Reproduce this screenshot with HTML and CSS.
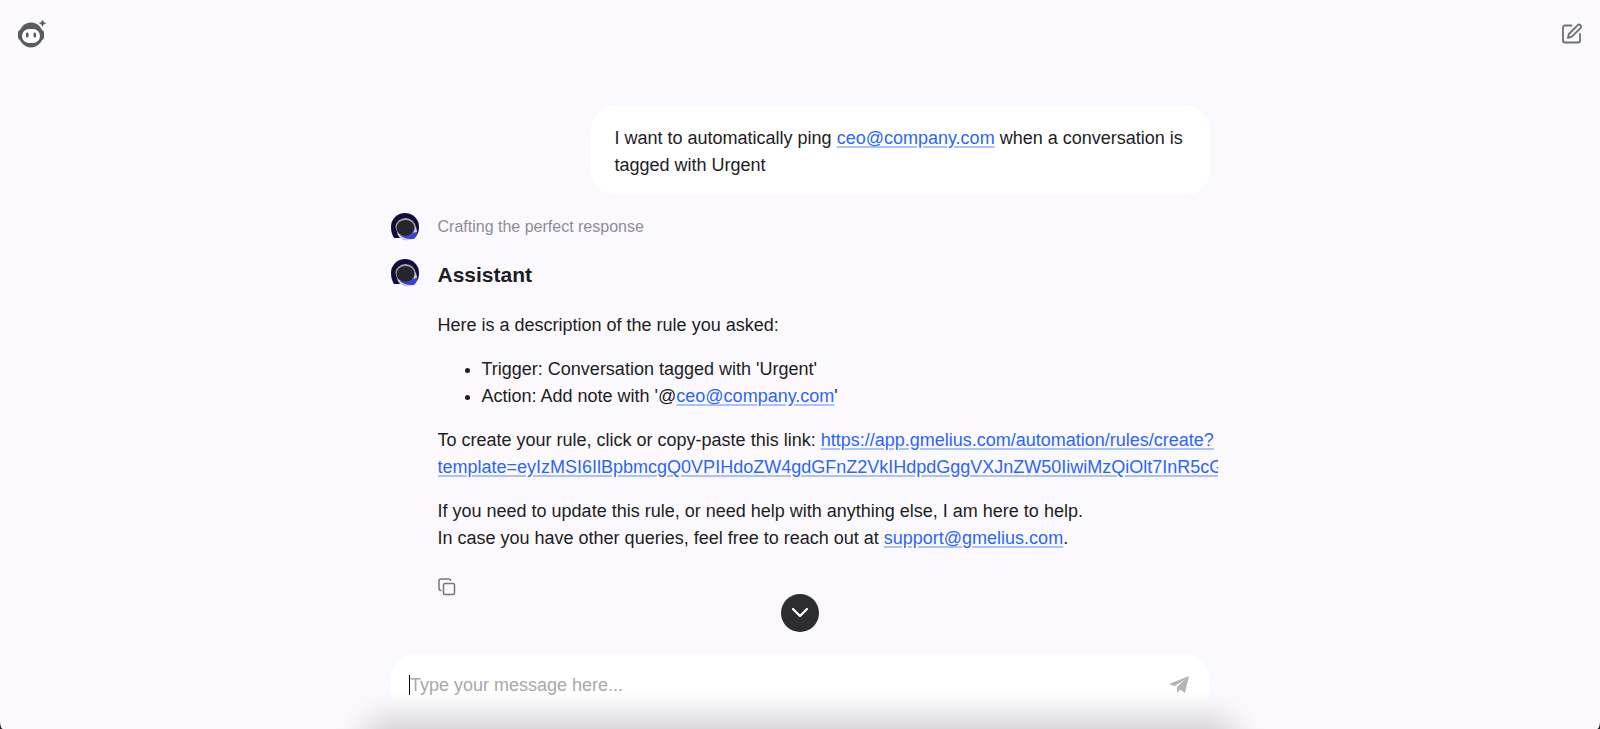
FILE: index.html
```html
<!DOCTYPE html>
<html lang="en">
<head>
  <meta charset="UTF-8" />
  <meta name="viewport" content="width=device-width, initial-scale=1.0"/>
  <title>Assistant</title>
  <link rel="stylesheet" href="styles.css">
</head>
<body>
  <header class="topbar">
    <a class="logo" href="#" aria-label="Home">
      <svg width="30" height="30" viewBox="0 0 30 30">
        <ellipse cx="14" cy="16" rx="12" ry="12.500" fill="#5b5b5d"/>
        <rect x="1" y="11" width="26" height="10" rx="3" fill="#5b5b5d"/>
        <rect x="5" y="10" width="18" height="14" rx="7" fill="#fff"/>
        <rect x="9" y="13.500" width="2.500" height="5" rx="1.200" fill="#5b5b5d"/>
        <rect x="16.500" y="13.500" width="2.500" height="5" rx="1.200" fill="#5b5b5d"/>
        <path d="M25.500 1l1 2.200 2.200 1-2.200 1-1 2.200-1-2.200-2.200-1 2.200-1z" fill="#5b5b5d" stroke="#5b5b5d" stroke-width=".5"/>
      </svg>
    </a>
    <button class="icon-btn" type="button" aria-label="New conversation">
      <svg width="22" height="22" viewBox="0 0 22 22" fill="none" stroke="#6f6f72" stroke-width="1.800" stroke-linecap="round" stroke-linejoin="round">
        <path d="M10.500 2.500H4a2 2 0 0 0-2 2v13a2 2 0 0 0 2 2h13a2 2 0 0 0 2-2V11"/>
        <path d="M16.500 2.300a2 2 0 0 1 3 2.800l-8.600 8.600-4 1.300 1-4z"/>
      </svg>
    </button>
  </header>

  <main class="chat">
    <div class="bubble">
      <p>I want to automatically ping <a href="mailto:ceo@company.com">ceo@company.com</a> when a conversation is tagged with Urgent</p>
    </div>

    <div class="row status">
      <svg class="avatar" viewBox="0 0 28 30">
        <path d="M14 0a14 14 0 0 1 14 14c0 5-2 9-5 11H3C1 22 0 18 0 14A14 14 0 0 1 14 0z" fill="#120b3c"/>
        <ellipse cx="16" cy="18" rx="10" ry="9.500" fill="#d0d0d8"/>
        <path d="M9 22l17-3c0 3-1 5-3 7-5 0-10 0-14-4z" fill="#3a3fe0"/>
        <ellipse cx="14.500" cy="14" rx="10" ry="9" fill="#a5a5ae"/>
        <ellipse cx="14.500" cy="15" rx="9" ry="8" fill="#25252b"/>
      </svg>
      <p class="status-text">Crafting the perfect response</p>
    </div>

    <div class="row">
      <svg class="avatar" viewBox="0 0 28 30">
        <path d="M14 0a14 14 0 0 1 14 14c0 5-2 9-5 11H3C1 22 0 18 0 14A14 14 0 0 1 14 0z" fill="#120b3c"/>
        <ellipse cx="16" cy="18" rx="10" ry="9.500" fill="#d0d0d8"/>
        <path d="M9 22l17-3c0 3-1 5-3 7-5 0-10 0-14-4z" fill="#3a3fe0"/>
        <ellipse cx="14.500" cy="14" rx="10" ry="9" fill="#a5a5ae"/>
        <ellipse cx="14.500" cy="15" rx="9" ry="8" fill="#25252b"/>
      </svg>
      <div class="answer">
        <h2>Assistant</h2>
        <p>Here is a description of the rule you asked:</p>
        <ul>
          <li>Trigger: Conversation tagged with 'Urgent'</li>
          <li>Action: Add note with '@<a href="mailto:ceo@company.com">ceo@company.com</a>'</li>
        </ul>
        <p class="long-link">To create your rule, click or copy-paste this link: <a href="#">https://app.gmelius.com/automation/rules/create?<br>template=eyIzMSI6IlBpbmcgQ0VPIHdoZW4gdGFnZ2VkIHdpdGggVXJnZW50IiwiMzQiOlt7InR5cG</a></p>
        <p>If you need to update this rule, or need help with anything else, I am here to help.<br>In case you have other queries, feel free to reach out at <a href="mailto:support@gmelius.com">support@gmelius.com</a>.</p>
        <button class="icon-btn copy" type="button" aria-label="Copy">
          <svg width="18" height="18" viewBox="0 0 18 18" fill="none" stroke="#77777a" stroke-width="1.500" stroke-linecap="round" stroke-linejoin="round">
            <rect x="5.500" y="5.500" width="11" height="11" rx="1.500"/>
            <path d="M3 12.500H2.500A1.500 1.500 0 0 1 1 11V2.500A1.500 1.500 0 0 1 2.500 1H11a1.500 1.500 0 0 1 1.500 1.500"/>
          </svg>
        </button>
      </div>
    </div>
  </main>

  <footer class="footer">
    <button class="scroll-btn" type="button" aria-label="Scroll to bottom">
      <svg width="18" height="12" viewBox="0 0 18 12" fill="none" stroke="#fff" stroke-width="2.200" stroke-linecap="round" stroke-linejoin="round">
        <path d="M2 2l7 7 7-7"/>
      </svg>
    </button>
    <form class="composer">
      <span class="caret"></span>
      <input type="text" placeholder="Type your message here..." aria-label="Message" />
      <button class="icon-btn" type="button" aria-label="Send">
        <svg width="20" height="18" viewBox="0 0 20 18">
          <path d="M20 0L0 8l5.500 2.200L16 3.500 8 11v6l3-3.500 5 3.500z" fill="#b5b5b8"/>
        </svg>
      </button>
    </form>
    <div class="shade"></div>
  </footer>
</body>
</html>
```

FILE: styles.css
```css
* {
  box-sizing: border-box;
}

html {
  background-color: #222;
}

body {
  margin: 0;
  min-height: 100vh;
  display: flex;
  flex-direction: column;
  border-radius: 0 0 3px 3px / 0 0 8px 8px;
  font-family: "Liberation Sans", Arial, sans-serif;
  font-size: 18px;
  line-height: 27px;
  color: #1d1d1f;
  background-color: #fbf9fd;
}

a {
  color: #2b66fa;
  text-decoration-color: #a9c3fc;
  text-decoration-thickness: 2px;
  text-underline-offset: 2px;
}

p, ul, h2 {
  margin: 0;
}

button {
  border: none;
  padding: 0;
  cursor: pointer;
}

.icon-btn {
  display: flex;
  background: none;
}

.topbar {
  display: flex;
  justify-content: space-between;
  align-items: center;
  padding: 19px 17px;
}

.logo {
  display: flex;
}

.chat {
  width: 100%;
  max-width: 819px;
  margin: 0 auto;
  padding-top: 38px;
  flex: 1;
  display: flex;
  flex-direction: column;
}

.bubble {
  align-self: flex-end;
  max-width: 619px;
  padding: 19px 24px 16px;
  border-radius: 24px;
  background: #fff;
}

.row {
  display: flex;
  align-items: flex-start;
  gap: 19px;
}

.status {
  margin: 18px 0 16px;
}

.avatar {
  width: 28px;
  height: 30px;
  flex: none;
}

.status-text {
  font-size: 16px;
  color: #8f8c99;
}

.answer {
  flex: 1;
  min-width: 0;
  margin-right: -8px;
  padding-top: 2px;
  display: flex;
  flex-direction: column;
  gap: 17px;
}

.answer h2 {
  font-size: 21px;
  margin-bottom: 7px;
}

.answer ul {
  padding-left: 44px;
}

.long-link {
  overflow: hidden;
  white-space: nowrap;
}

.copy {
  align-self: flex-start;
  margin-top: 9px;
}

.footer {
  position: relative;
  display: flex;
  flex-direction: column;
  align-items: center;
  padding-bottom: 13px;
}

.scroll-btn {
  position: absolute;
  top: -60px;
  width: 38px;
  height: 38px;
  display: flex;
  align-items: center;
  justify-content: center;
  border-radius: 50%;
  background: #2d2c30;
}

.composer {
  width: 100%;
  max-width: 818px;
  height: 62px;
  display: flex;
  align-items: center;
  padding: 0 20px 0 18px;
  border-radius: 24px;
  background: linear-gradient(#fff 60%, #fbfafc);
}

.caret {
  width: 1px;
  height: 20px;
  background: #000;
}

.composer input {
  flex: 1;
  min-width: 0;
  border: none;
  outline: none;
  padding: 0;
  font: inherit;
  background: none;
}

.composer input::placeholder {
  color: #a9a8ac;
}

/* soft shadow along the bottom edge */
.shade {
  position: absolute;
  bottom: 0;
  left: 0;
  right: 0;
  height: 40px;
  display: flex;
  justify-content: center;
  overflow: hidden;
  pointer-events: none;
}

.shade::before {
  content: "";
  width: 860px;
  height: 40px;
  margin-top: 40px;
  flex: none;
  border-radius: 20px;
  box-shadow: 0 0 32px 10px rgba(0, 0, 0, 0.18);
}
```
